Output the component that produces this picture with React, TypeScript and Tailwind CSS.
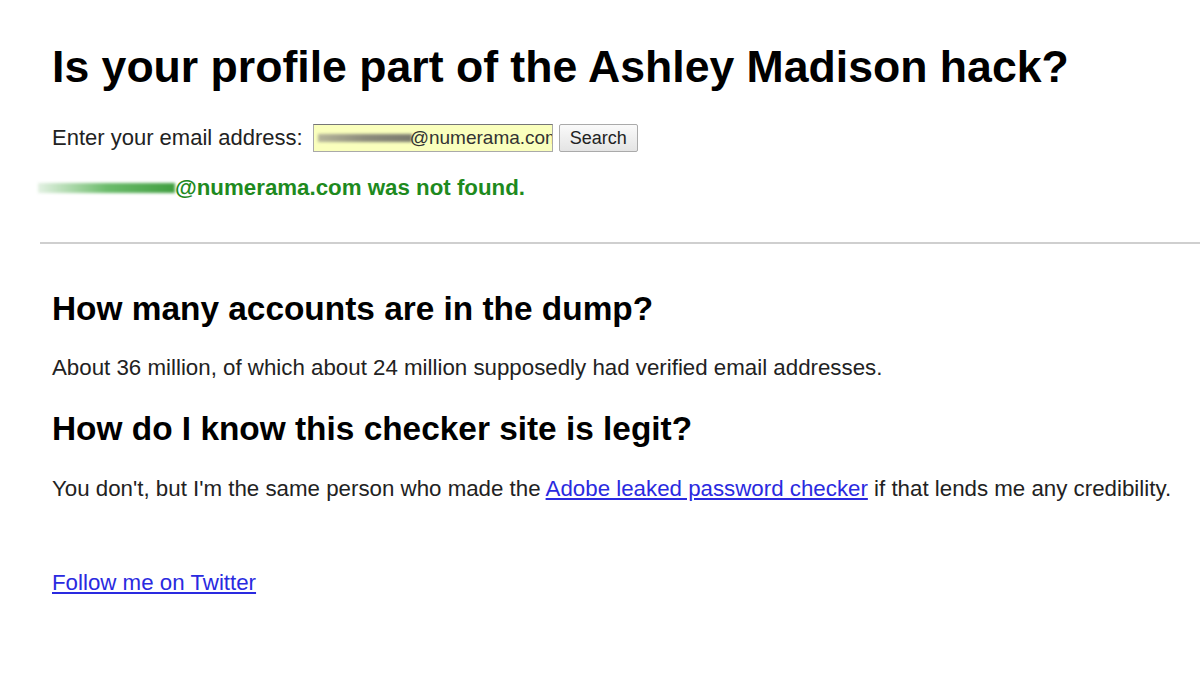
import React from 'react';

const font = { fontFamily: '"Liberation Sans", Arial, sans-serif' };

function BlurredName({ className }: { className: string }) {
  return <span className={className} aria-hidden="true" />;
}

export default function App() {
  return (
    <div className="w-[1200px] h-[675px] bg-white overflow-hidden pt-[44px] pl-[40px] text-[#222]" style={font}>
      <div className="pl-[12px]">
        <h1 className="text-[44.6px] leading-[46px] font-bold text-black whitespace-nowrap">
          Is your profile part of the Ashley Madison hack?
        </h1>

        <form className="mt-[34px] flex items-center h-[28px]" onSubmit={e => e.preventDefault()}>
          <label className="text-[22px] leading-[28px] mr-[10px]">Enter your email address:</label>
          <div className="relative w-[240px] h-[28px] bg-[#faffbd] border border-[#a9a9a9] border-t-[#767676] overflow-hidden flex items-center">
            <BlurredName className="absolute left-[4px] top-[9px] w-[94px] h-[8px] bg-gradient-to-r from-[#b5b59a] via-[#8c8c7c] to-[#7a7a6e] blur-[1.5px]" />
            <span className="absolute left-[96px] text-[19px] leading-[28px] text-[#333] whitespace-nowrap">@numerama.com</span>
          </div>
          <button
            type="submit"
            className="ml-[6px] w-[79px] h-[28px] border border-[#aaa] rounded-[2px] bg-gradient-to-b from-[#fafafa] to-[#e4e4e4] text-[18px] leading-none text-[#222]"
          >
            Search
          </button>
        </form>

        <p className="mt-[24px] -ml-[14px] flex items-center text-[22.3px] leading-[24px] font-bold text-[#1e8a1e] whitespace-nowrap">
          <BlurredName className="inline-block w-[137px] h-[10px] bg-gradient-to-r from-[#e3f1e3] via-[#6cbc6c] to-[#3f9e3f] blur-[1.5px]" />
          @numerama.com was not found.
        </p>
      </div>

      <hr className="mt-[42px] border-0 h-[2px] bg-[#cfcfcf]" />

      <div className="pl-[12px]">
        <h2 className="mt-[47px] text-[33.4px] leading-[36px] font-bold text-black">How many accounts are in the dump?</h2>
        <p className="mt-[29px] text-[22.3px] leading-[24px] whitespace-nowrap">
          About 36 million, of which about 24 million supposedly had verified email addresses.
        </p>

        <h2 className="mt-[31px] text-[33.4px] leading-[36px] font-bold text-black">How do I know this checker site is legit?</h2>
        <p className="mt-[30px] text-[22.3px] leading-[24px] whitespace-nowrap">
          You don't, but I'm the same person who made the{' '}
          <a href="#" className="text-[#2a2ae0] underline">Adobe leaked password checker</a>{' '}
          if that lends me any credibility.
        </p>

        <p className="mt-[70px] text-[22.3px] leading-[24px]">
          <a href="#" className="text-[#2a2ae0] underline">Follow me on Twitter</a>
        </p>
      </div>
    </div>
  );
}
